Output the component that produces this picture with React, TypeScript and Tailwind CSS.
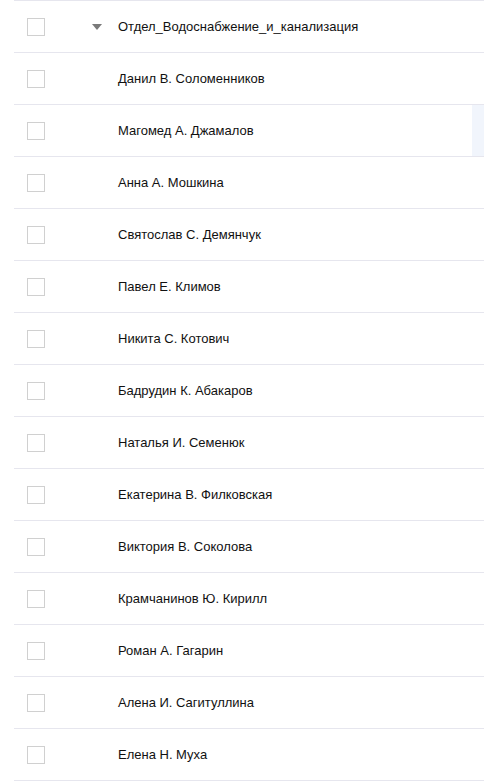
const names = [
  "Данил В. Соломенников",
  "Магомед А. Джамалов",
  "Анна А. Мошкина",
  "Святослав С. Демянчук",
  "Павел Е. Климов",
  "Никита С. Котович",
  "Бадрудин К. Абакаров",
  "Наталья И. Семенюк",
  "Екатерина В. Филковская",
  "Виктория В. Соколова",
  "Крамчанинов Ю. Кирилл",
  "Роман А. Гагарин",
  "Алена И. Сагитуллина",
  "Елена Н. Муха",
];

function Checkbox() {
  return <div className="w-[18px] h-[18px] border border-[#d0d0d0] bg-white shrink-0" />;
}

export default function App() {
  return (
    <div className="w-[484px] h-[781px] bg-white pl-[14px] font-['Liberation_Sans',Arial,sans-serif] text-[13px] text-[#111]">
      <div className="border-b border-[#e6e6ee]">
        {/* Group header */}
        <div className="flex items-center h-[52px] border-t border-[#e6e6ee] pl-[13px]">
          <Checkbox />
          <div className="w-[73px] flex justify-end pr-[16px]">
            <svg width="10" height="6" viewBox="0 0 10 6">
              <path d="M0 0 L10 0 L5 6 Z" fill="#7a7a7a" />
            </svg>
          </div>
          <span>Отдел_Водоснабжение_и_канализация</span>
        </div>
        {names.map((n, i) => (
          <div key={n} className="relative flex items-center h-[52px] border-t border-[#e6e6ee] pl-[13px]">
            <Checkbox />
            <span className="ml-[73px]">{n}</span>
            {i === 1 && <div className="absolute right-0 top-0 bottom-0 w-[12px] bg-[#f1f5fc]" />}
          </div>
        ))}
      </div>
    </div>
  );
}
